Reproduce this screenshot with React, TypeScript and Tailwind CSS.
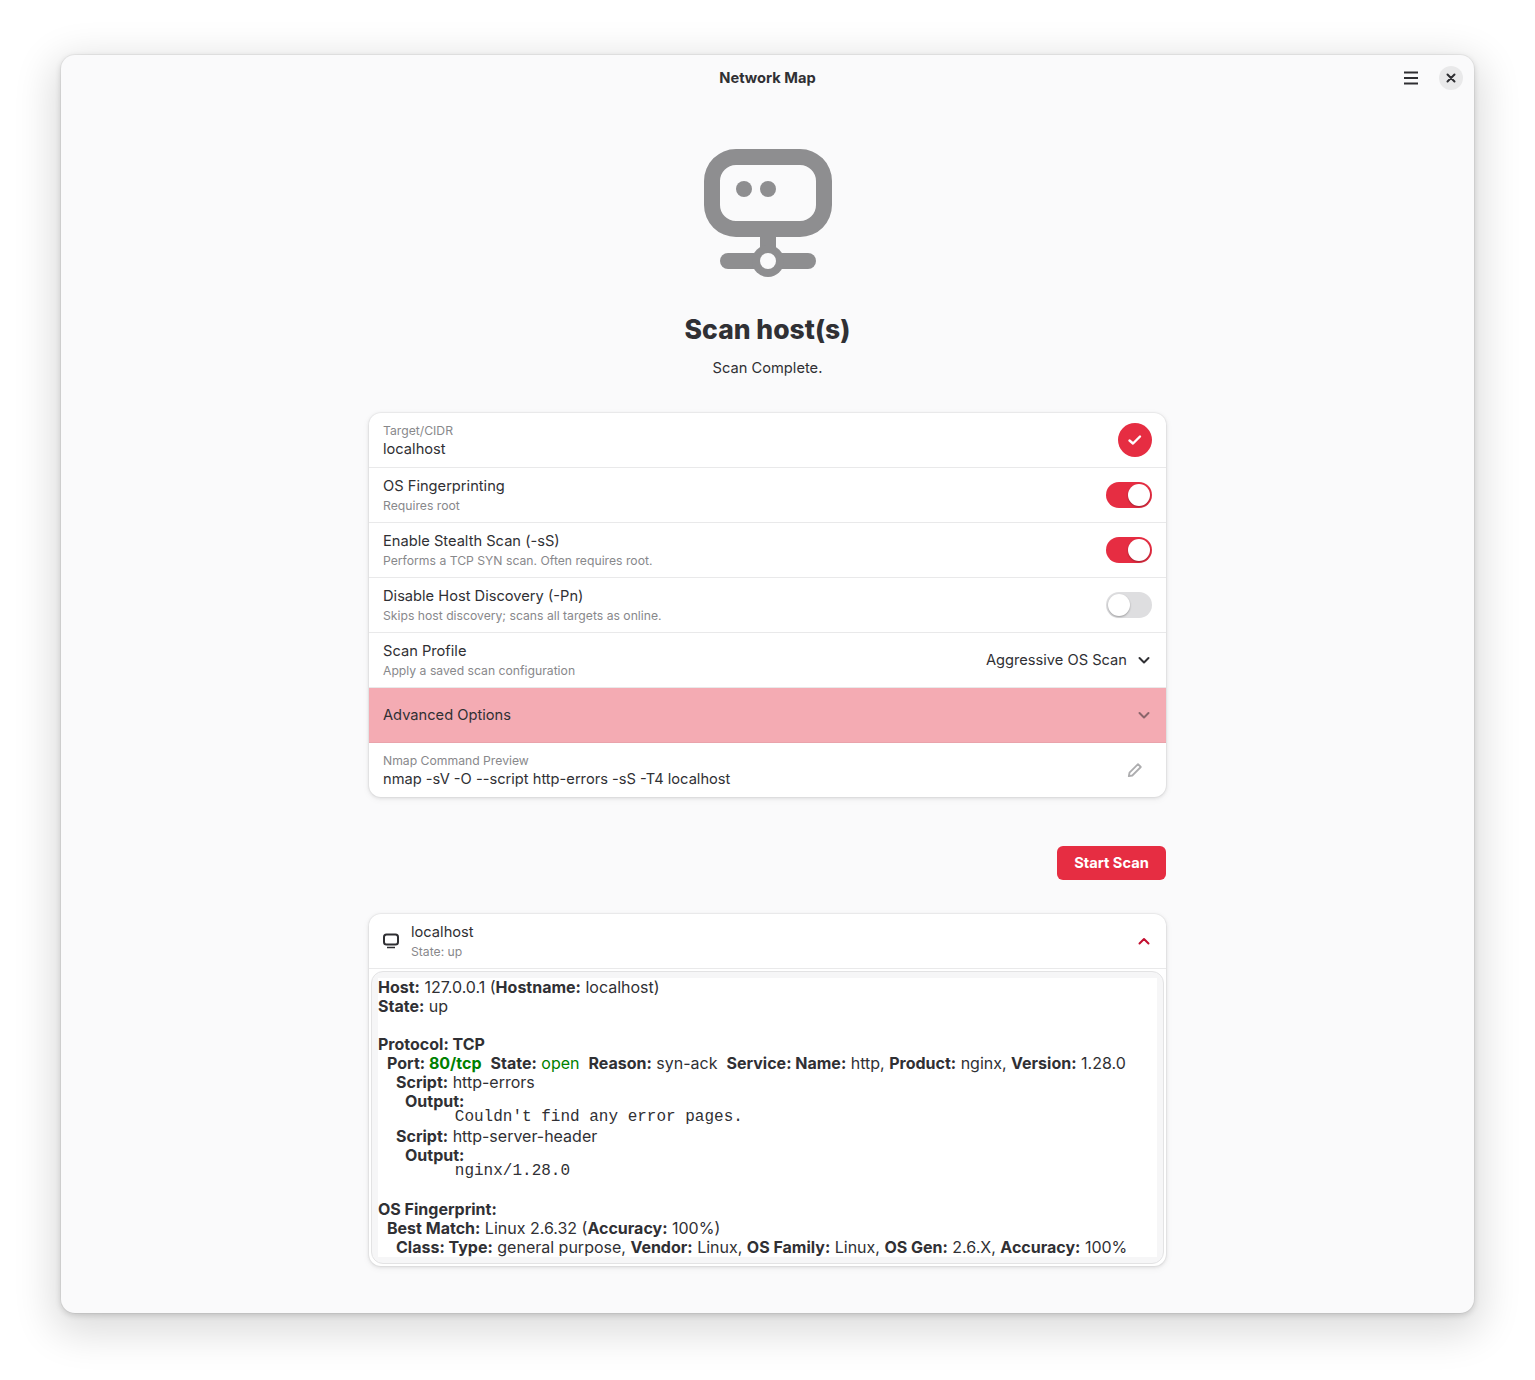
import React from "react";

const font = { fontFamily: "Inter, sans-serif" };

function Toggle({ on }: { on: boolean }) {
  return on ? (
    <div className="flex h-[26px] w-[46px] items-center justify-end rounded-full bg-[#e62d42] pr-[2px]">
      <div className="h-[22px] w-[22px] rounded-full bg-white shadow-[0_1px_2px_rgba(0,0,0,0.3)]" />
    </div>
  ) : (
    <div className="flex h-[26px] w-[46px] items-center justify-start rounded-full bg-[#dedee0] pl-[2px]">
      <div className="h-[22px] w-[22px] rounded-full bg-white shadow-[0_1px_2px_rgba(0,0,0,0.3)]" />
    </div>
  );
}

function Chevron({ className, up }: { className: string; up?: boolean }) {
  return (
    <svg width="16" height="16" viewBox="0 0 16 16" className={className}>
      <path d={up ? "M3.5 10.5L8 6l4.5 4.5" : "M3.5 6L8 10.5 12.5 6"} fill="none" stroke="currentColor" strokeWidth="2" strokeLinecap="round" strokeLinejoin="round" />
    </svg>
  );
}

function Row({ title, sub, children }: { title: string; sub: string; children: React.ReactNode }) {
  return (
    <div className="flex h-[55px] items-center justify-between border-b border-[#e9e9ea] pl-[14px] pr-[14px]">
      <div className="flex flex-col">
        <div className="text-[14.67px] leading-[18px] text-[#303034]">{title}</div>
        <div className="mt-[3px] text-[12.2px] leading-[15px] text-[#88888b]">{sub}</div>
      </div>
      {children}
    </div>
  );
}

function B({ children }: { children: React.ReactNode }) {
  return <span className="font-bold">{children}</span>;
}

function L({ children }: { children?: React.ReactNode }) {
  return <div className="h-[19px] whitespace-pre leading-[19px]">{children}</div>;
}

function M({ children }: { children: string }) {
  return <div className="h-[16px] whitespace-pre pb-[4px] text-[16px] leading-[12px]" style={{ fontFamily: "'Liberation Mono', monospace" }}>{children}</div>;
}

export default function App() {
  return (
    <div className="min-h-[1380px] bg-white pb-[67px] pl-[61px] pr-[61px] pt-[55px]" style={font}>
      <div className="flex h-[1258px] flex-col rounded-[14px] bg-[#fafafb] shadow-[0_0_0_1px_rgba(0,0,0,0.04),0_2px_6px_rgba(0,0,0,0.16),0_12px_40px_8px_rgba(0,0,0,0.14)]">
        <div className="relative flex h-[46px] shrink-0 items-center justify-end pr-[11px]">
          <div className="absolute inset-x-0 text-center text-[14.67px] font-bold text-[#303034]">Network Map</div>
          <svg width="16" height="16" viewBox="0 0 16 16" className="mr-[20px] mt-[0px] text-[#2e2e32]">
            <path d="M1 2.5h14M1 8h14M1 13.5h14" stroke="currentColor" strokeWidth="2" />
          </svg>
          <div className="flex h-[24px] w-[24px] items-center justify-center rounded-full bg-[#e9e9ea]">
            <svg width="16" height="16" viewBox="0 0 16 16" className="text-[#2e2e32]">
              <path d="M4.5 4.5l7 7M11.5 4.5l-7 7" stroke="currentColor" strokeWidth="2" strokeLinecap="round" />
            </svg>
          </div>
        </div>

        <div className="mt-[48px] flex flex-col items-center">
          <svg width="128" height="128" viewBox="0 0 128 128" className="text-[#8e8e90]">
            <path fillRule="evenodd" fill="currentColor" d="M32 0h64a32 32 0 0 1 32 32v24a32 32 0 0 1-32 32H32A32 32 0 0 1 0 56V32A32 32 0 0 1 32 0zM32 16a16 16 0 0 0-16 16v8a16 16 0 0 0 0 0v16a16 16 0 0 0 16 16h64a16 16 0 0 0 16-16V32a16 16 0 0 0-16-16z" />
            <circle cx="40" cy="40" r="8" fill="currentColor" />
            <circle cx="64" cy="40" r="8" fill="currentColor" />
            <rect x="56" y="86" width="16" height="22" fill="currentColor" />
            <rect x="16" y="104" width="96" height="16" rx="8" fill="currentColor" />
            <circle cx="64" cy="112" r="16" fill="currentColor" />
            <circle cx="64" cy="112" r="8" fill="#fafafb" />
          </svg>
          <h1 className="mt-[36px] text-[26.5px] font-extrabold leading-[33px] text-[#303034]">Scan host(s)</h1>
          <p className="mt-[13px] text-[14.67px] leading-[18px] text-[#303034]">Scan Complete.</p>
        </div>

        <div className="mx-auto mt-[36px] w-[797px] overflow-hidden rounded-[12px] bg-white shadow-[0_0_0_1px_rgba(0,0,10,0.03),0_1px_3px_1px_rgba(0,0,0,0.07),0_2px_6px_2px_rgba(0,0,0,0.03)]">
          <div className="flex h-[55px] items-center justify-between border-b border-[#e9e9ea] px-[14px]">
            <div className="flex flex-col">
              <div className="text-[12.2px] leading-[15px] text-[#88888b]">Target/CIDR</div>
              <div className="mt-[2px] text-[14.67px] leading-[18px] text-[#303034]">localhost</div>
            </div>
            <div className="flex h-[34px] w-[34px] items-center justify-center rounded-full bg-[#e62d42]">
              <svg width="16" height="16" viewBox="0 0 16 16" className="text-white">
                <path d="M2.5 8.5L6 11.5 13 4.5" fill="none" stroke="currentColor" strokeWidth="2.4" strokeLinecap="round" strokeLinejoin="round" />
              </svg>
            </div>
          </div>
          <Row title="OS Fingerprinting" sub="Requires root"><Toggle on /></Row>
          <Row title="Enable Stealth Scan (-sS)" sub="Performs a TCP SYN scan. Often requires root."><Toggle on /></Row>
          <Row title="Disable Host Discovery (-Pn)" sub="Skips host discovery; scans all targets as online."><Toggle on={false} /></Row>
          <Row title="Scan Profile" sub="Apply a saved scan configuration">
            <div className="flex items-center gap-[9px] text-[14.67px] text-[#303034]">
              <span>Aggressive OS Scan</span>
              <Chevron className="text-[#303034]" />
            </div>
          </Row>
          <div className="flex h-[55px] items-center justify-between border-b border-[#eaa3ab] bg-[#f4abb3] px-[14px]">
            <div className="text-[14.67px] text-[#303034]">Advanced Options</div>
            <Chevron className="text-[#8b656b]" />
          </div>
          <div className="flex h-[54px] items-center justify-between pl-[14px] pr-[23px]">
            <div className="flex flex-col">
              <div className="text-[12.2px] leading-[15px] text-[#88888b]">Nmap Command Preview</div>
              <div className="mt-[2px] text-[14.67px] leading-[18px] text-[#303034]">nmap -sV -O --script http-errors -sS -T4 localhost</div>
            </div>
            <svg width="16" height="16" viewBox="0 0 16 16" className="text-[#adadaf]">
              <path d="M11 2.2l2.8 2.8L5.3 13.5 1.8 14.2l.7-3.5z" fill="none" stroke="currentColor" strokeWidth="1.8" strokeLinejoin="round" />
            </svg>
          </div>
        </div>

        <div className="mx-auto mt-[49px] flex w-[797px] justify-end">
          <div className="flex h-[34px] w-[109px] items-center justify-center rounded-[6px] bg-[#e62d42] text-[14.67px] font-bold text-white">Start Scan</div>
        </div>

        <div className="mx-auto mt-[34px] h-[352px] w-[797px] overflow-hidden rounded-[12px] bg-white shadow-[0_0_0_1px_rgba(0,0,10,0.03),0_1px_3px_1px_rgba(0,0,0,0.07),0_2px_6px_2px_rgba(0,0,0,0.03)]">
          <div className="flex h-[55px] items-center justify-between border-b border-[#e9e9ea] px-[14px]">
            <div className="flex items-center gap-[12px]">
              <svg width="16" height="16" viewBox="0 0 16 16" className="text-[#2e2e32]">
                <rect x="1" y="1.5" width="14" height="10" rx="2.5" fill="none" stroke="currentColor" strokeWidth="2" />
                <path d="M4 14.5h8" stroke="currentColor" strokeWidth="1.6" />
              </svg>
              <div className="flex flex-col">
                <div className="text-[14.67px] leading-[18px] text-[#303034]">localhost</div>
                <div className="mt-[3px] text-[12.2px] leading-[15px] text-[#88888b]">State: up</div>
              </div>
            </div>
            <Chevron up className="text-[#c30f30]" />
          </div>
          <div className="mx-[2px] mt-[2px] h-[293px] overflow-hidden rounded-[12px] border border-[#e3e3e4] bg-[#f6f6f7] pb-[6px] pl-[6px] pr-[6px] pt-[6px]">
            <div className="h-[279px] overflow-hidden bg-white text-[16px] text-[#303034]">
              <L><B>Host:</B> 127.0.0.1 (<B>Hostname:</B> localhost)</L>
              <L><B>State:</B> up</L>
              <L />
              <L><B>Protocol: TCP</B></L>
              <L>  <B>Port: <span className="text-[#008000]">80/tcp</span></B>  <B>State:</B> <span className="text-[#008000]">open</span>  <B>Reason:</B> syn-ack  <B>Service: Name:</B> http, <B>Product:</B> nginx, <B>Version:</B> 1.28.0</L>
              <L>    <B>Script:</B> http-errors</L>
              <L>      <B>Output:</B></L>
              <M>        Couldn't find any error pages.</M>
              <L>    <B>Script:</B> http-server-header</L>
              <L>      <B>Output:</B></L>
              <M>        nginx/1.28.0</M>
              <L />
              <L><B>OS Fingerprint:</B></L>
              <L>  <B>Best Match:</B> Linux 2.6.32 (<B>Accuracy:</B> 100%)</L>
              <L>    <B>Class: Type:</B> general purpose, <B>Vendor:</B> Linux, <B>OS Family:</B> Linux, <B>OS Gen:</B> 2.6.X, <B>Accuracy:</B> 100%</L>
            </div>
          </div>
        </div>
      </div>
    </div>
  );
}
